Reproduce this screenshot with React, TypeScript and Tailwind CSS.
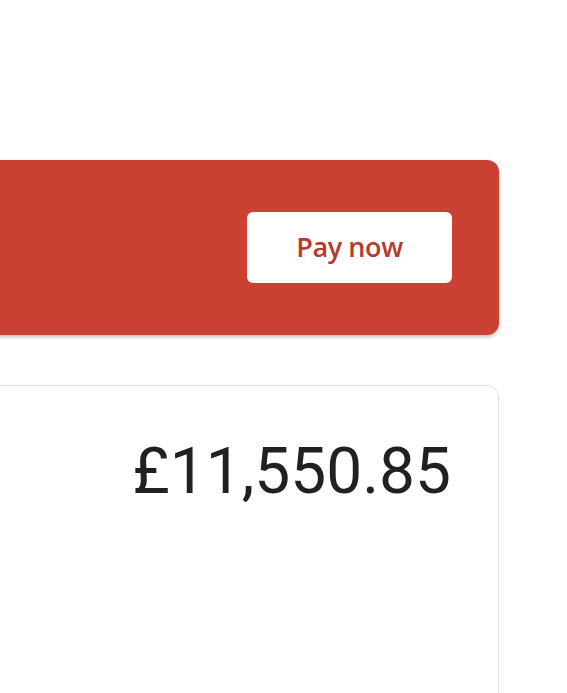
import React from 'react';

const App: React.FC = () => {
    return (
        <div className="min-h-[693px] w-full bg-white overflow-hidden" style={{ fontFamily: 'Roboto, sans-serif' }}>
            <div className="w-[519px] ml-[-20px] pt-[160px]">
                {/* Payment banner */}
                <div className="h-[175px] rounded-[12px] bg-[#c84133] shadow-[0_2px_4px_rgba(0,0,0,0.25)] flex items-center justify-end pr-[47px]">
                    <button
                        className="w-[205px] h-[71px] rounded-[6px] bg-white text-[#b73a30] text-[27px] font-semibold tracking-[-0.4px]"
                        style={{ fontFamily: '"Open Sans", sans-serif' }}
                    >
                        Pay now
                    </button>
                </div>

                {/* Balance card */}
                <div className="mt-[50px] h-[320px] rounded-[12px] border-[1.5px] border-[#e2e2e2] flex justify-end pr-[47px] pt-[48px]">
                    <span className="text-[64px] leading-[76px] text-[#202124]">£11,550.85</span>
                </div>
            </div>
        </div>
    );
};

export default App;
